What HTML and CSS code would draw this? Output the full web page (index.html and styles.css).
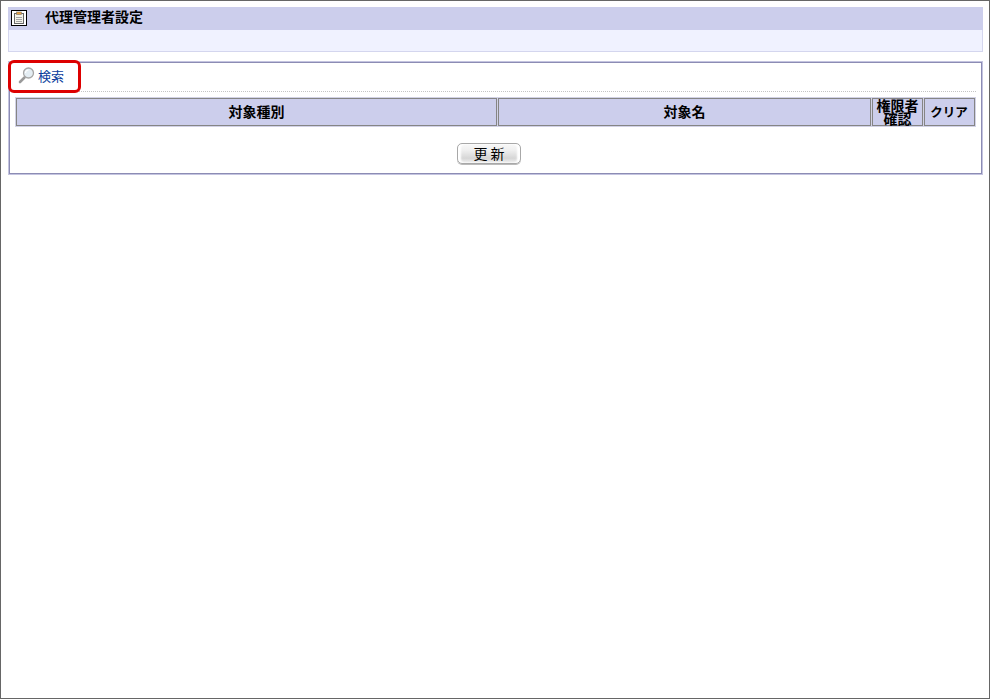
FILE: index.html
```html
<!DOCTYPE html>
<html lang="ja">
<head>
<meta charset="utf-8">
<title>代理管理者設定</title>
<link rel="stylesheet" href="styles.css">
</head>
<body>
<div class="frame">
  <header class="head">
    <div class="title-bar">
      <span class="title-icon">
        <svg width="14" height="14" viewBox="0 0 14 14"><rect x="2.5" y="2.5" width="9" height="10" fill="#f4f3ea" stroke="#666"/><rect x="4.5" y="1" width="5" height="2.6" fill="#e8a040" stroke="#777" stroke-width=".6"/><path d="M4 6.5h6M4 8.5h6M4 10.5h6" stroke="#a4a4a4"/></svg>
      </span>
      <h1 class="title">代理管理者設定</h1>
    </div>
    <div class="sub-bar"></div>
  </header>
  <section class="panel">
    <div class="tools">
      <a class="search" href="#">
        <svg class="lens" width="17" height="17" viewBox="0 0 17 17"><path d="M6.5 10.5L2 15" stroke="#9a9a9a" stroke-width="2.6" stroke-linecap="round"/><circle cx="10.5" cy="6" r="5" fill="#e4edf3" stroke="#a6a6a6" stroke-width="1.3"/><path d="M7.5 6a3 3 0 0 1 3-3" fill="none" stroke="#fff" stroke-width="1.2"/></svg>
        <span>検索</span>
      </a>
    </div>
    <table class="grid">
      <tr>
        <th class="c-type">対象種別</th>
        <th class="c-name">対象名</th>
        <th class="c-check">権限者<br>確認</th>
        <th class="c-clear">クリア</th>
      </tr>
    </table>
    <div class="actions"><button class="btn" type="button">更 新</button></div>
  </section>
  <div class="callout"></div>
</div>
</body>
</html>
```
FILE: styles.css
```css
html, body { margin: 0; padding: 0; background: #fff; }
body { font-family: "Noto Sans CJK JP", "Liberation Sans", sans-serif; font-size: 14px; color: #000; }
.frame {
  position: relative;
  box-sizing: border-box;
  width: 990px;
  height: 699px;
  border: 1px solid #666;
  padding: 6px 6px 0 7px;
}
.title-bar {
  display: flex;
  align-items: center;
  height: 23px;
  background: #ccceec;
}
.title-icon {
  box-sizing: border-box;
  width: 16px;
  height: 16px;
  margin: 0 0 1px 3px;
  border: 1px solid #000;
  background: #fff;
  display: flex;
}
.title-icon svg { display: block; }
.title { margin: -5px 0 0 18px; font-size: 14px; font-weight: 700; line-height: 18px; }
.sub-bar {
  box-sizing: border-box;
  height: 22px;
  background: #f0f2ff;
  border: 1px solid #d4d6ee;
  border-top: 0;
}
.panel {
  box-sizing: border-box;
  margin-top: 9px;
  height: 114px;
  border: 1px solid #c4c4e0;
  box-shadow: inset 0 0 0 1px #8c8cb4;
  padding: 1px 6px;
}
.tools {
  box-sizing: border-box;
  height: 29px;
  padding-bottom: 4px;
  border-bottom: 1px dotted #c4c4c4;
  display: flex;
  align-items: center;
}
.search {
  display: flex;
  align-items: center;
  gap: 3px;
  margin-left: 3px;
  color: #0a3c9c;
  text-decoration: none;
  font-size: 13px;
}
.lens { display: block; }
.grid {
  margin-top: 5px;
  width: 961px;
  table-layout: fixed;
  border-collapse: separate;
  border-spacing: 1px;
  background: #d2d2e6;
}
.grid th {
  box-sizing: border-box;
  height: 28px;
  padding: 0 0 2px;
  background: #ccceec;
  border: 1px solid #858585;
  font-size: 14px;
  font-weight: 700;
  line-height: 13px;
  text-align: center;
}
.c-type { width: 481px; }
.c-name { width: 373px; }
.grid .c-check { width: 51px; padding: 0; vertical-align: top; }
.grid .c-clear { width: 51px; font-size: 12.5px; padding-right: 1px; }
.actions {
  display: flex;
  justify-content: center;
  margin-top: 16px;
  padding-right: 13px;
}
.btn {
  width: 64px;
  height: 21px;
  padding: 0;
  border: 1px solid #a8a8a8;
  border-radius: 5px;
  background: linear-gradient(#f8f8f8, #eeeeee 35%, #d6d6d6 75%, #f0f0f0);
  box-shadow: inset 3px 0 2px #fff, inset -3px 0 2px #fff, 0 1px 0 #bbb;
  font-family: inherit;
  font-size: 14px;
  line-height: 19px;
  color: #000;
}
.callout {
  position: absolute;
  left: 7px;
  top: 59px;
  box-sizing: border-box;
  width: 73px;
  height: 33px;
  border: 3px solid #dd0000;
  border-radius: 6px;
}
```
